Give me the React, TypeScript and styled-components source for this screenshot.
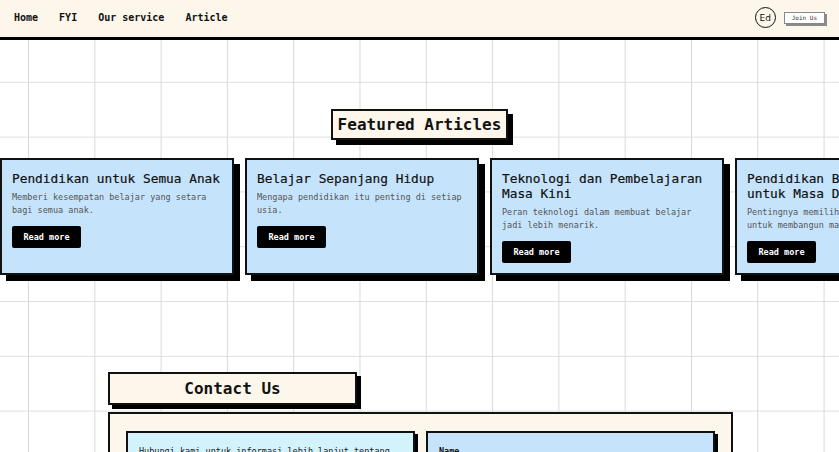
import React from "react";
import styled, { createGlobalStyle } from "styled-components";

const mono = `"DejaVu Sans Mono", "Liberation Mono", monospace`;

const GlobalStyle = createGlobalStyle`
  html, body {
    margin: 0;
    padding: 0;
  }
  body {
    font-family: ${mono};
    color: #111;
    background-color: #fff;
    background-image:
      linear-gradient(to right, #d9d9d9 1px, transparent 1px),
      linear-gradient(to bottom, #dedede 1px, transparent 1px);
    background-size: 66.3px 54.8px;
    background-position: 28px 27px;
  }
`;

type Article = { title: string; desc: string };

const articles: Article[] = [
  {
    title: "Pendidikan untuk Semua Anak",
    desc: "Memberi kesempatan belajar yang setara bagi semua anak.",
  },
  {
    title: "Belajar Sepanjang Hidup",
    desc: "Mengapa pendidikan itu penting di setiap usia.",
  },
  {
    title: "Teknologi dan Pembelajaran Masa Kini",
    desc: "Peran teknologi dalam membuat belajar jadi lebih menarik.",
  },
  {
    title: "Pendidikan Berkualitas untuk Masa Depan",
    desc: "Pentingnya memilih pendidikan yang tepat untuk membangun masa depan.",
  },
];

const App = () => {
  return (
    <>
      <GlobalStyle />
      <Navbar>
        <NavLinks>
          <NavLink>Home</NavLink>
          <NavLink>FYI</NavLink>
          <NavLink>Our service</NavLink>
          <NavLink>Article</NavLink>
        </NavLinks>
        <NavRight>
          <Avatar>Ed</Avatar>
          <JoinButton>Join Us</JoinButton>
        </NavRight>
      </Navbar>

      <Main>
        <Featured>
          <SectionTitle>Featured Articles</SectionTitle>
          <CardRow>
            {articles.map(a => (
              <Card key={a.title}>
                <CardTitle>{a.title}</CardTitle>
                <CardText>{a.desc}</CardText>
                <ReadMore>Read more</ReadMore>
              </Card>
            ))}
          </CardRow>
        </Featured>

        <Contact>
          <ContactTitle>Contact Us</ContactTitle>
          <ContactBox>
            <InfoPanel>
              Hubungi kami untuk informasi lebih lanjut tentang layanan dan
              program pendidikan kami.
            </InfoPanel>
            <FormPanel>
              <Label>Name</Label>
              <Input />
            </FormPanel>
          </ContactBox>
        </Contact>
      </Main>
    </>
  );
};

const Navbar = styled.nav`
  height: 40px;
  box-sizing: border-box;
  padding: 0 11px 2px 14px;
  background: #fdf6eb;
  border-bottom: 3px solid #000;
  display: flex;
  align-items: center;
  justify-content: space-between;
`;

const NavLinks = styled.div`
  display: flex;
  gap: 21px;
`;

const NavLink = styled.a`
  font-family: ${mono};
  font-size: 10px;
  font-weight: bold;
  color: #111;
  cursor: pointer;
`;

const NavRight = styled.div`
  display: flex;
  align-items: center;
  gap: 8px;
`;

const Avatar = styled.div`
  width: 19px;
  height: 19px;
  border: 1.5px solid #111;
  border-radius: 50%;
  display: flex;
  align-items: center;
  justify-content: center;
  font-family: "DejaVu Sans", sans-serif;
  font-size: 9px;
  color: #111;
`;

const JoinButton = styled.button`
  font-family: ${mono};
  font-size: 6px;
  color: #333;
  background: #fff;
  border: 1px solid #888;
  box-shadow: 2px 2px 0 #8a8a8a;
  padding: 2px 7px;
  height: 12px;
  line-height: 6px;
  margin-right: 3px;
  cursor: pointer;
`;

const Main = styled.main`
  padding-top: 69px;
`;

const Featured = styled.section`
  display: flex;
  flex-direction: column;
  align-items: center;
`;

const SectionTitle = styled.h2`
  margin: 0;
  font-family: ${mono};
  font-size: 16px;
  font-weight: bold;
  line-height: 19px;
  padding: 4px 5px;
  background: #fdf6eb;
  border: 2px solid #111;
  box-shadow: 5px 5px 0 #000;
`;

const CardRow = styled.div`
  align-self: stretch;
  display: flex;
  gap: 11px;
  margin-top: 18px;
  padding-bottom: 8px;
  overflow: hidden;
`;

const Card = styled.article`
  flex: 0 0 234px;
  box-sizing: border-box;
  background: #c5e4fc;
  border: 2px solid #111;
  box-shadow: 6px 6px 0 #000;
  padding: 11px 10px 10px;
`;

const CardTitle = styled.h3`
  margin: 0 0 5px;
  font-family: ${mono};
  font-size: 12.8px;
  font-weight: normal;
  line-height: 15px;
  color: #111;
  -webkit-text-stroke: 0.2px #111;
`;

const CardText = styled.p`
  margin: 0 0 8px;
  font-size: 8.5px;
  line-height: 13px;
  color: #555;
`;

const ReadMore = styled.button`
  font-family: ${mono};
  font-size: 8.5px;
  font-weight: bold;
  color: #fff;
  background: #000;
  border: none;
  border-radius: 2px;
  height: 22px;
  width: 69px;
  padding: 0;
  cursor: pointer;
`;

const Contact = styled.section`
  width: 625px;
  margin: 89px auto 0;
  padding-left: 2px;
`;

const ContactTitle = styled.h2`
  margin: 0;
  width: 249px;
  box-sizing: border-box;
  text-align: center;
  font-family: ${mono};
  font-size: 16px;
  font-weight: bold;
  line-height: 19px;
  padding: 5px 0;
  background: #fdf6eb;
  border: 2px solid #111;
  box-shadow: 4px 4px 0 #000;
`;

const ContactBox = styled.div`
  margin-top: 7px;
  background: #fdf6eb;
  border: 2px solid #111;
  padding: 17px 16px;
  display: grid;
  grid-template-columns: 1fr 1fr;
  gap: 11px;
`;

const Panel = styled.div`
  border: 2px solid #111;
  box-shadow: 3px 3px 0 #000;
  padding: 12px 11px;
  font-size: 8.5px;
  line-height: 13px;
`;

const InfoPanel = styled(Panel)`
  background: #d2f2fc;
  color: #222;
`;

const FormPanel = styled(Panel)`
  background: #c5e4fc;
  display: flex;
  flex-direction: column;
  gap: 4px;
`;

const Label = styled.label`
  font-weight: bold;
  color: #111;
`;

const Input = styled.input`
  border: 2px solid #111;
  height: 20px;
  background: #fff;
`;

export default App;
